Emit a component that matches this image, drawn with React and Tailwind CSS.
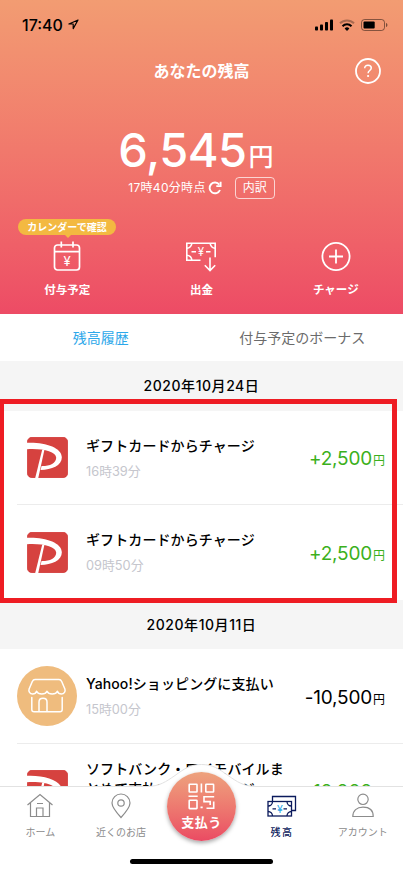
// App.jsx
// Balance screen of a wallet app: balance header, history list, bottom tabs.

const history = [
  {
    date: "2020年10月24日",
    highlighted: true,
    items: [
      { id: 1, icon: "pay", title: "ギフトカードからチャージ", time: "16時39分", amount: "+2,500" },
      { id: 2, icon: "pay", title: "ギフトカードからチャージ", time: "09時50分", amount: "+2,500" },
    ],
  },
  {
    date: "2020年10月11日",
    items: [
      { id: 3, icon: "shop", title: "Yahoo!ショッピングに支払い", time: "15時00分", amount: "-10,500" },
      {
        id: 4,
        icon: "pay",
        title: "ソフトバンク・ワイモバイルまとめて支払いからチャージ",
        amount: "+10,000",
      },
    ],
  },
];

function StatusBar() {
  return (
    <div className="flex h-[49px] items-center justify-between pl-[22px] pr-[15px] text-black">
      <div className="flex items-center gap-[5px]">
        <span className="text-[16px] leading-none font-medium">17:40</span>
        <svg width="11" height="11" viewBox="0 0 11 11" fill="none" stroke="currentColor" strokeWidth="1.2" strokeLinejoin="round">
          <path d="M10 1 .9 5h4.3v4.6z" />
        </svg>
      </div>
      <div className="flex items-center gap-[6px]">
        <svg width="18" height="12" viewBox="0 0 18 12" fill="currentColor">
          <rect x="0" y="7.6" width="3" height="4" rx=".8" />
          <rect x="5" y="5.4" width="3" height="6.2" rx=".8" />
          <rect x="10" y="3" width="3" height="8.6" rx=".8" />
          <rect x="15" y=".4" width="3" height="11.2" rx=".8" />
        </svg>
        <svg width="16" height="12" viewBox="0 0 16 12" fill="none" stroke="currentColor">
          <path d="M1 4.3a10 10 0 0 1 14 0" strokeWidth="2" opacity=".3" />
          <path d="M3.5 7.2a6.4 6.4 0 0 1 9 0" strokeWidth="2" />
          <path d="M8 12 5.6 9.5a3.4 3.4 0 0 1 4.8 0z" fill="currentColor" stroke="none" />
        </svg>
        <svg width="27" height="12" viewBox="0 0 27 12" fill="none">
          <rect x=".5" y=".5" width="23" height="11" rx="3" stroke="currentColor" opacity=".45" />
          <rect x="2.5" y="2.4" width="11.2" height="7.2" rx="1" fill="currentColor" />
          <path d="M25 4v4c1-.3 1.4-1 1.4-2S26 4.3 25 4z" fill="currentColor" opacity=".5" />
        </svg>
      </div>
    </div>
  );
}

function Header() {
  return (
    <header className="h-[314px] shrink-0 bg-linear-to-b from-[#f29c72] to-[#ed4b65] text-white">
      <StatusBar />

      <div className="grid h-11 grid-cols-[1fr_auto_1fr] items-center">
        <h1 className="col-start-2 text-[16px] leading-none font-bold">あなたの残高</h1>
        <svg className="mr-[22px] justify-self-end" width="26" height="26" viewBox="0 0 26 26" fill="none" stroke="currentColor">
          <circle cx="13" cy="13" r="12" strokeWidth="1.8" />
          <path d="M9.7 10.3c0-1.9 1.3-3.1 3.3-3.1s3.3 1.2 3.3 2.9c0 2.4-3.2 2.5-3.2 5.1" strokeWidth="1.5" />
          <circle cx="13.1" cy="18" r="1.1" fill="currentColor" stroke="none" />
        </svg>
      </div>

      <div className="mt-[32px] flex h-[50px] items-baseline justify-center pr-[11px]">
        <span className="text-[47px] leading-[50px] font-medium tracking-[-0.5px]">6,545</span>
        <span className="ml-[2px] text-[25px] leading-none font-medium">
          <span className="relative top-[-1px]">円</span>
        </span>
      </div>

      <div className="mt-[2px] flex h-[22px] items-center justify-center">
        <span className="text-[12px] leading-none tracking-[0.3px]">17時40分時点</span>
        <svg className="ml-[2px]" width="14" height="14" viewBox="0 0 14 14" fill="none" stroke="currentColor" strokeWidth="1.9">
          <path d="M12 9a5.4 5.4 0 1 1-.7-5.4" />
          <path d="M12.6 .8v4.3H8.3" />
        </svg>
        <span className="ml-[13px] flex h-[22px] w-10 items-center justify-center rounded border border-white/70 text-[12px] leading-none">
          内訳
        </span>
      </div>

      <div className="mt-[20px] grid grid-cols-3">
        <Action label="付与予定" badge="カレンダーで確認">
          <svg width="28" height="32" viewBox="0 0 28 32" fill="none" stroke="currentColor" strokeWidth="1.7">
            <rect x="1.5" y="5" width="25" height="25" rx="3" />
            <path d="M1.5 11.6h25M8.3 1.5v6M20 1.5v6" />
            <text x="14" y="25.5" textAnchor="middle" fontSize="13" fill="currentColor" stroke="none">¥</text>
          </svg>
        </Action>
        <Action label="出金">
          <svg width="32" height="32" viewBox="0 0 32 32" fill="none" stroke="currentColor" strokeWidth="1.6">
            <path d="M15.5 20.2H1.8V3.2h28.4v14" />
            <path d="M1.8 8.2a5 5 0 0 0 5-5M25.2 3.2a5 5 0 0 0 5 5M1.8 15.2a5 5 0 0 1 5 5M6.5 11.8H11M21 11.8h4.5" />
            <path d="M25 17.5v13M19.8 25.3l5.2 5.2 5.2-5.2" />
            <text x="16" y="16" textAnchor="middle" fontSize="11.5" fill="currentColor" stroke="none">¥</text>
          </svg>
        </Action>
        <Action label="チャージ">
          <svg width="30" height="32" viewBox="0 0 30 32" fill="none" stroke="currentColor" strokeWidth="1.8">
            <circle cx="15" cy="16.5" r="13.6" />
            <path d="M15 9.5v14M8 16.5h14" />
          </svg>
        </Action>
      </div>
    </header>
  );
}

function Action({ label, badge, children }) {
  return (
    <div className="relative flex flex-col items-center pt-[21px]">
      {badge && (
        <div className="absolute top-0 left-[18px] flex h-[16px] w-[98px] items-center justify-center rounded-full bg-[#f3b941] text-[10px] leading-none font-bold">
          {badge}
          <span className="absolute top-[15px] left-[46px] border-x-[4px] border-t-[4px] border-x-transparent border-t-[#f3b941]" />
        </div>
      )}
      {children}
      <span className="mt-[10px] text-[11.5px] leading-[16px] font-bold">{label}</span>
    </div>
  );
}

function PayIcon() {
  return (
    <svg width="41" height="41" viewBox="0 0 40 40">
      <rect x=".3" y=".3" width="39.4" height="39.4" rx="4.5" fill="#d6423f" stroke="#cc2222" strokeWidth=".6" />
      <path
        d="M0 5.6C17 4.8 34 10 34 19.8 34 28 24 32 13.2 32.2L14.2 28.4C22 28.6 28.500 25.5 28.500 20.200 28.500 14 14 11 0 12z"
        fill="#fff"
      />
      <path d="M14.8 12.500h2.200L11 40H8z" fill="#fff" />
    </svg>
  );
}

function ShopIcon() {
  return (
    <div className="flex size-[60px] items-center justify-center rounded-full bg-[#efbc7e]">
      <svg width="40" height="36" viewBox="0 0 40 36" fill="none" stroke="#fff" strokeWidth="1.5" strokeLinejoin="round" strokeLinecap="round">
        <path d="M8 1.5h24c1.500 0 2 .5 2.700 2l3.200 7.500c.8 2.500-.7 5-3.500 5-2 0-3.400-1-4-2.800-.8 1.800-2.700 2.800-5.200 2.800s-4.400-1-5.200-2.800c-.8 1.800-2.700 2.800-5.200 2.800S10.400 15 9.600 13.200C9 15 7.600 16 5.600 16c-2.800 0-4.300-2.500-3.500-5l3.200-7.500c.7-1.500 1.200-2 2.700-2z" />
        <path d="M4.8 19.5v12c0 1.500.8 2.300 2.300 2.300h25.800c1.500 0 2.300-.8 2.300-2.300v-12M12 33.500V24c0-2.200 1.600-3.700 4-3.700s4 1.500 4 3.700v9.500" />
      </svg>
    </div>
  );
}

function HistoryRow({ item, last }) {
  const income = item.amount.startsWith("+");
  return (
    <li className="flex h-[94.5px] pl-[17px]">
      <div className={`flex min-w-0 flex-1 pr-[18px] ${last ? "" : "border-b border-[#ececec]"}`}>
        <div className="flex w-[60px] shrink-0 items-center justify-center">
          {item.icon === "pay" ? <PayIcon /> : <ShopIcon />}
        </div>
        {/* entries without a time line have a two-line title, so it starts higher */}
        <div className={`ml-[9px] w-[200px] shrink-0 ${item.time ? "pt-[25px]" : "pt-[15px]"}`}>
          <p className="text-[14px] leading-[20px] font-medium tracking-[0.1px] text-black">{item.title}</p>
          {item.time && <p className="mt-[7px] text-[12.8px] leading-[18px] text-[#c5c6cd]">{item.time}</p>}
        </div>
        <p
          className={`flex flex-1 items-baseline justify-end pt-[36.5px] whitespace-nowrap ${
            income ? "text-[#3cb01c]" : "text-black"
          }`}
        >
          <span className="text-[19px] leading-6 tracking-[-0.2px]">{item.amount}</span>
          <span className="ml-[1px] text-[12px] leading-none">円</span>
        </p>
      </div>
    </li>
  );
}

function HistoryGroup({ group }) {
  return (
    <section className="relative">
      <h2 className="flex h-[49.5px] items-center justify-center bg-[#f5f5f5] pt-[1px] text-[14px] leading-none font-medium tracking-[0.55px] text-black">
        {group.date}
      </h2>
      <ul>
        {group.items.map((item, i) => (
          <HistoryRow key={item.id} item={item} last={i === group.items.length - 1} />
        ))}
      </ul>
      {/* red frame round the gift card charges */}
      {group.highlighted && (
        <div className="absolute top-[38px] left-[-1px] z-10 h-[204px] w-[398px] border-[5px] border-[#ee1c23]" />
      )}
    </section>
  );
}

function NavItem({ label, active, children }) {
  return (
    <div className={`flex flex-1 flex-col items-center pt-[6px] ${active ? "text-[#0b1a5c]" : "text-[#8c8c8c]"}`}>
      {children}
      <span className={`mt-[5px] text-[10px] leading-[14px] ${active ? "font-medium tracking-[1.5px]" : ""}`}>{label}</span>
    </div>
  );
}

function BottomNav() {
  return (
    <nav className="relative h-[87px] shrink-0 bg-white">
      {/* top edge with the bump behind the pay button */}
      <svg className="absolute top-[-24px] left-0" width="403" height="26" viewBox="0 0 403 26" fill="#fff">
        <path d="M0 24.5h146c14 0 20-5 29-11 9-6.500 15-11 26.500-11s17.500 4.500 26.500 11c9 6 15 11 29 11h146V26H0z" />
        <path d="M0 24.5h146c14 0 20-5 29-11 9-6.500 15-11 26.500-11s17.500 4.500 26.500 11c9 6 15 11 29 11h146" fill="none" stroke="#e2e2e2" />
      </svg>

      <div className="relative flex">
        <NavItem label="ホーム">
          <svg width="28" height="28" viewBox="0 0 28 28" fill="none" stroke="currentColor" strokeWidth="1.2">
            <path d="M1.5 13 14 2.5 26.5 13M4.5 11v13.5h19V11M10.5 24.5V16H17v8.5M11 11.5h6" />
          </svg>
        </NavItem>
        <NavItem label="近くのお店">
          <svg width="28" height="28" viewBox="0 0 28 28" fill="none" stroke="currentColor" strokeWidth="1.2">
            <path d="M14 25.5C9 20 5 15.5 5 11a9 9 0 0 1 18 0c0 4.5-4 9-9 14.5z" />
            <circle cx="14" cy="11" r="3.2" />
          </svg>
        </NavItem>
        <div className="flex flex-1 justify-center">
          <div className="mt-[-14px] flex size-[69px] shrink-0 flex-col items-center rounded-full bg-linear-to-b from-[#eda27d] to-[#ea4a63] pt-[11px] text-white shadow-[0_2px_4px_rgba(0,0,0,0.35)]">
            <svg width="27" height="27" viewBox="0 0 27 27" fill="none" stroke="currentColor" strokeWidth="1.6">
              <rect x="1.2" y="1.2" width="7.8" height="7.8" rx=".5" />
              <rect x="17.8" y="1.2" width="7.8" height="7.8" rx=".5" />
              <rect x="1.2" y="17.2" width="7.8" height="8.4" rx=".5" />
              <path d="M13.4 .5v9M.5 13.3h9.2M26.2 13.7H16v4.9h6.2V22M18.5 25.2h7.2v-6.700M12.5 24.4h2.2" />
            </svg>
            <span className="mt-[4px] text-[13px] leading-[16px] font-bold tracking-[0.5px]">支払う</span>
          </div>
        </div>
        <NavItem label="残高" active>
          <svg width="30" height="28" viewBox="0 0 30 28" fill="none" stroke="currentColor" strokeWidth="1.3">
            <path d="M5.5 9.5v-5h23v14H25" />
            <rect x="1" y="9.5" width="23.5" height="14.5" />
            <path d="M1 14a4.5 4.5 0 0 0 4.5-4.5M20 9.5a4.5 4.5 0 0 0 4.5 4.5M1 19.5A4.5 4.5 0 0 1 5.5 24M20 24a4.5 4.5 0 0 1 4.5-4.5M5.5 16.8H9M16.5 16.8H20" />
            <text x="12.8" y="20.7" textAnchor="middle" fontSize="10.5" fill="#2ba6e8" stroke="none">¥</text>
          </svg>
        </NavItem>
        <NavItem label="アカウント">
          <svg width="28" height="28" viewBox="0 0 28 28" fill="none" stroke="currentColor" strokeWidth="1.2">
            <circle cx="14" cy="7.3" r="5.2" />
            <path d="M3.8 24.5c0-6 4-9.300 10.200-9.300s10.200 3.300 10.200 9.300z" />
          </svg>
        </NavItem>
      </div>

      {/* home indicator */}
      <div className="absolute top-[73px] left-[130px] h-[5px] w-[143px] rounded-full bg-black" />
    </nav>
  );
}

export default function App() {
  return (
    <div className="flex h-[873px] w-[403px] flex-col overflow-hidden bg-white font-[Inter,'Noto_Sans_CJK_JP',sans-serif]">
      <Header />
      <main className="min-h-0 flex-1 overflow-hidden">
        <div className="grid h-[47px] grid-cols-2 text-center text-[14px] leading-[47px]">
          <div className="border-b border-[#3fb2ee] text-[#2da8ea]">残高履歴</div>
          <div className="text-[#6b6b6b]">付与予定のボーナス</div>
        </div>
        {history.map((group) => (
          <HistoryGroup key={group.date} group={group} />
        ))}
      </main>
      <BottomNav />
    </div>
  );
}
